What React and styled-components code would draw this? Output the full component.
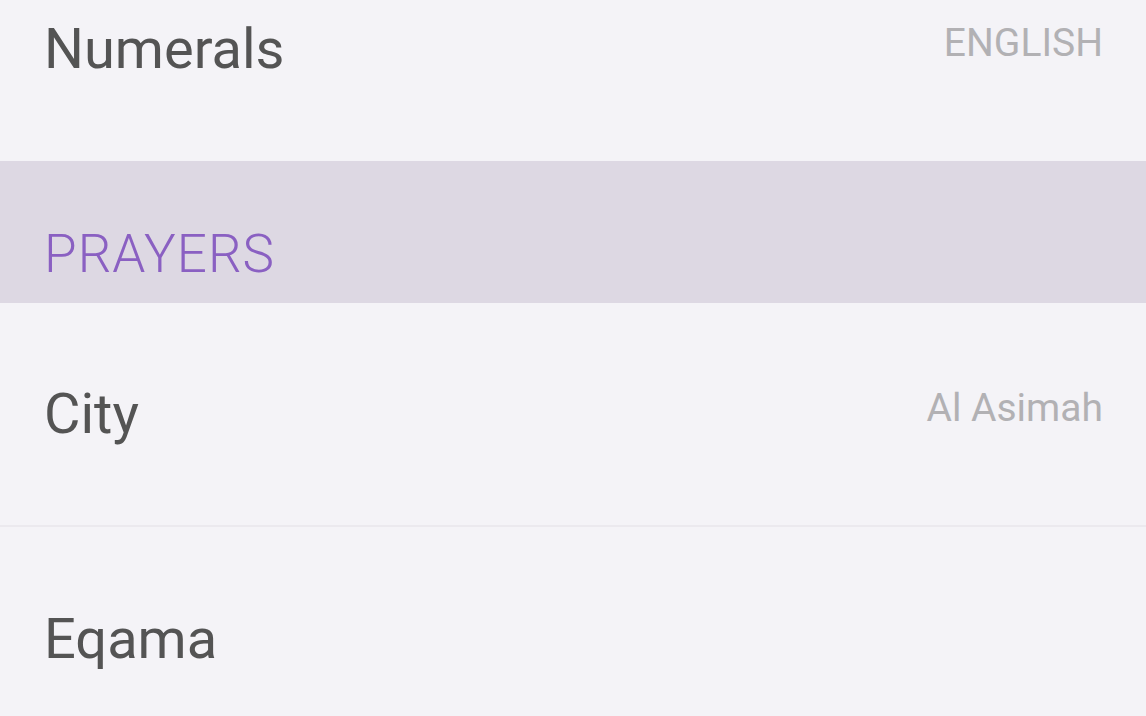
import React from "react";
import styled, { createGlobalStyle } from "styled-components";

const Global = createGlobalStyle`
  html, body { margin: 0; padding: 0; background: #f4f3f7; overflow: hidden; }
  body { font-family: Roboto, "Noto Sans", sans-serif; }
`;

const Screen = styled.div`
  width: 1146px;
  height: 716px;
  overflow: hidden;
  background: #f4f3f7;
`;

const List = styled.div`
  display: flex;
  flex-direction: column;
  margin-top: -63px;
`;

const Row = styled.div`
  height: 224px;
  display: flex;
  align-items: center;
  justify-content: space-between;
  padding: 0 43px 0 44px;
  box-sizing: border-box;
  border-bottom: ${(p) => (p.$divider ? "2px solid #ebe9ee" : "none")};
`;

const Label = styled.span`
  font-size: 56px;
  color: #545454;
  font-weight: 400;
  line-height: 1;
`;

const Value = styled.span`
  font-size: 39px;
  color: #b2b1b4;
  font-weight: 400;
  line-height: 1;
  margin-top: -12px;
`;

const SectionHeader = styled.div`
  height: 142px;
  background: #ddd8e3;
  display: flex;
  align-items: flex-end;
  padding: 0 44px 22px 44px;
  box-sizing: border-box;
`;

const SectionTitle = styled.span`
  font-size: 53px;
  font-weight: 300;
  color: #8a60c2;
  letter-spacing: 1px;
  line-height: 1;
`;

export default function App() {
  return (
    <Screen>
      <Global />
      <List>
        <Row>
          <Label>Numerals</Label>
          <Value>ENGLISH</Value>
        </Row>
        <SectionHeader>
          <SectionTitle>PRAYERS</SectionTitle>
        </SectionHeader>
        <Row $divider>
          <Label>City</Label>
          <Value>Al Asimah</Value>
        </Row>
        <Row>
          <Label>Eqama</Label>
        </Row>
      </List>
    </Screen>
  );
}
